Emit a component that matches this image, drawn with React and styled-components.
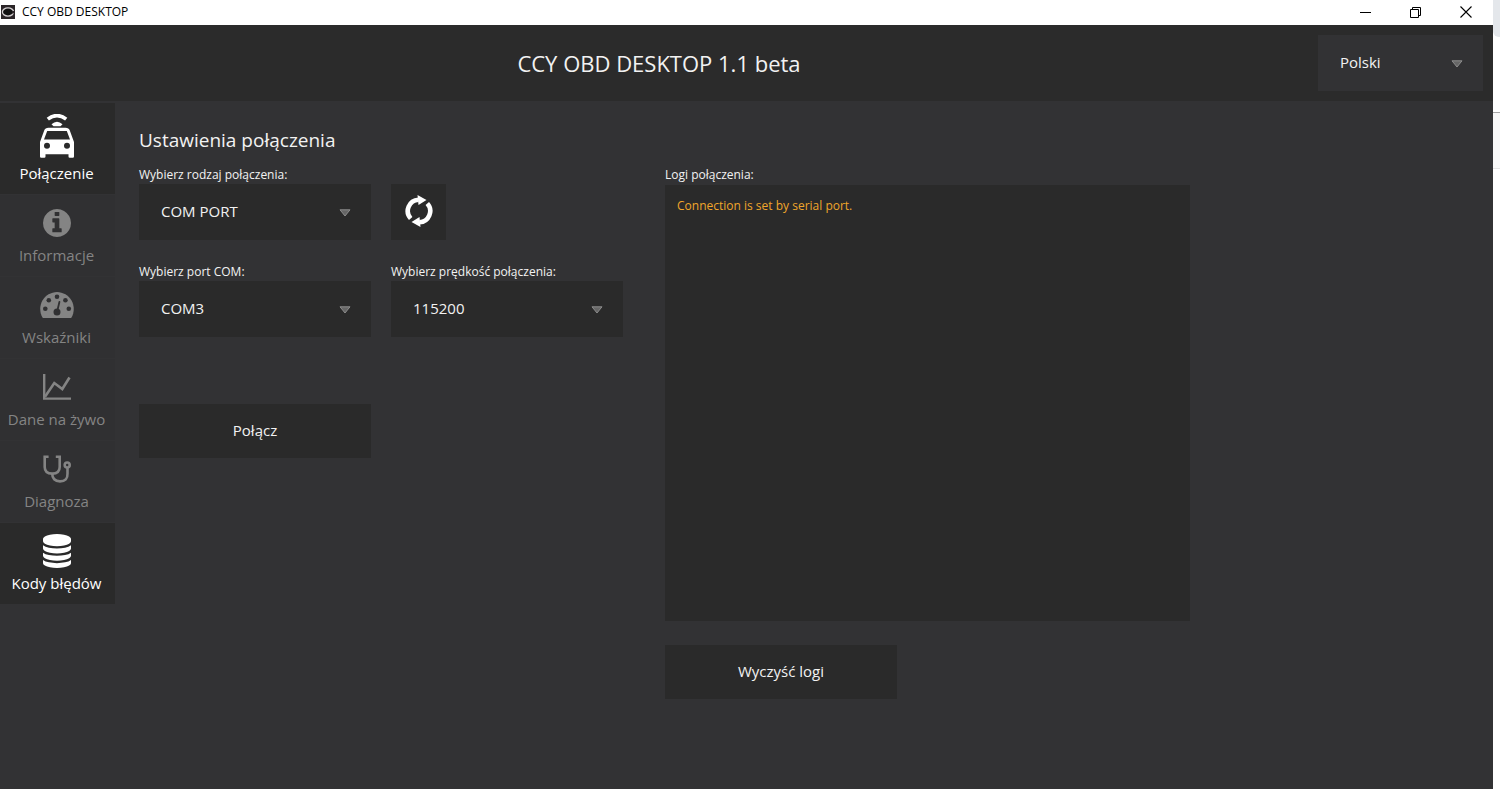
import { useState } from "react"
import styled, { createGlobalStyle } from "styled-components"

const GlobalStyle = createGlobalStyle`
    * {
        box-sizing: border-box;
    }
    body {
        margin: 0;
        background: #FFF;
        font-family: "Segoe UI", "Open Sans", "Noto Sans", sans-serif;
    }
    button, select {
        font-family: inherit;
    }
`;

function LogoIcon(){
    return(
        <svg width="14" height="14" viewBox="0 0 14 14" aria-hidden="true">
            <rect width="14" height="14" fill="#2B2528" />
            <ellipse cx="7" cy="7" rx="5.6" ry="4.1" fill="#111" stroke="#D5D0D2" strokeWidth="1.3" />
            <path d="M11 6h3v2.400h-3z" fill="#2B2528" />
        </svg>
    )
}

function CarIcon(){
    return(
        <svg width="34" height="44" viewBox="0 0 34 44" fill="currentColor" aria-hidden="true">
            <path d="M7.8 5.2Q17-2 26.200 5.200" fill="none" stroke="currentColor" strokeWidth="3.600" />
            <path d="M11.500 10.200Q17 5.200 22.500 10.200L20.500 12.200H13.500Z" />
            <path
                fillRule="evenodd"
                d="M8.500 13.700H25.500Q28.800 13.700 29.800 16.500L34 28V42.500Q34 43.700 32.800 43.700H29.700Q28.500 43.700 28.500 42.500V40.300H5.500V42.500Q5.500 43.700 4.300 43.700H1.200Q0 43.700 0 42.500V28L4.200 16.500Q5.200 13.700 8.500 13.700ZM7.200 17L4 25.600H30L26.800 17ZM7 28.700A3 3 0 1 0 7 34.700A3 3 0 1 0 7 28.700ZM27 28.700A3 3 0 1 0 27 34.700A3 3 0 1 0 27 28.700Z"
            />
        </svg>
    )
}

function InfoIcon(){
    return(
        <svg width="28" height="28" viewBox="0 128 1536 1536" fill="currentColor" aria-hidden="true">
            <path d="M1024 1376v-160q0-14-9-23t-23-9h-96v-512q0-14-9-23t-23-9h-320q-14 0-23 9t-9 23v160q0 14 9 23t23 9h96v320h-96q-14 0-23 9t-9 23v160q0 14 9 23t23 9h448q14 0 23-9t9-23zm-128-896v-160q0-14-9-23t-23-9h-192q-14 0-23 9t-9 23v160q0 14 9 23t23 9h192q14 0 23-9t9-23zm640 416q0 209-103 385.500t-279.500 279.500-385.500 103-385.500-103-279.500-279.500-103-385.500 103-385.500 279.500-279.500 385.500-103 385.500 103 279.500 279.500 103 385.500z" />
        </svg>
    )
}

function GaugeIcon(){
    return(
        <svg width="34" height="26" viewBox="0 0 34 26" aria-hidden="true">
            <path d="M17 0A17 17 0 0 1 31.500 25.500Q31.100 26 30.400 26H3.600Q2.900 26 2.500 25.500A17 17 0 0 1 17 0Z" fill="currentColor" />
            <g fill="#303032">
                <circle cx="5.300" cy="16.700" r="2.300" />
                <circle cx="8.800" cy="8.200" r="2.300" />
                <circle cx="17" cy="4.800" r="2.300" />
                <circle cx="25.400" cy="8.200" r="2.300" />
                <circle cx="28.800" cy="16.700" r="2.300" />
                <circle cx="17" cy="20" r="3.500" />
            </g>
            <path d="M17.400 18.500L19.400 10" stroke="#303032" strokeWidth="1.800" strokeLinecap="round" />
        </svg>
    )
}

function ChartIcon(){
    return(
        <svg width="28" height="26" viewBox="0 0 28 26" fill="none" stroke="currentColor" aria-hidden="true">
            <path d="M1.200 0V24.600H28" strokeWidth="2.400" />
            <path d="M2 22.800L11.300 9L19.300 15L26.500 3.500" strokeWidth="2.600" />
        </svg>
    )
}

function StethoscopeIcon(){
    return(
        <svg width="28" height="28" viewBox="0 0 28 28" fill="none" stroke="currentColor" strokeWidth="2.600" aria-hidden="true">
            <path d="M5.600 1.700H1.700V12Q1.700 18.600 9.200 18.600T16.700 12V1.700H12.800" />
            <path d="M9.200 18.600Q9.200 26.400 17 26.400T24.500 18.600V13" />
            <circle cx="24.200" cy="10" r="2.500" />
        </svg>
    )
}

function DatabaseIcon(){
    return(
        <svg width="28" height="34" viewBox="0 0 1536 1792" preserveAspectRatio="none" fill="currentColor" aria-hidden="true">
            <path d="M768 768q237 0 443-43t325-127v170q0 69-103 128t-280 93.500-385 34.500-385-34.500-280-93.500-103-128v-170q119 84 325 127t443 43zm0 768q237 0 443-43t325-127v170q0 69-103 128t-280 93.500-385 34.500-385-34.500-280-93.500-103-128v-170q119 84 325 127t443 43zm0-384q237 0 443-43t325-127v170q0 69-103 128t-280 93.500-385 34.500-385-34.500-280-93.500-103-128v-170q119 84 325 127t443 43zm0-1152q208 0 385 34.500t280 93.500 103 128v128q0 69-103 128t-280 93.500-385 34.500-385-34.500-280-93.500-103-128v-128q0-69 103-128t280-93.500 385-34.500z" />
        </svg>
    )
}

function RefreshIcon(){
    return(
        <svg width="28" height="32" viewBox="-14 -16 28 32" fill="currentColor" aria-hidden="true">
            <path d="M-8.300 7.500A11.200 11.200 0 0 1 -0.500 -11.200" fill="none" stroke="currentColor" strokeWidth="4.600" />
            <path d="M-1.500 -16L7.500 -11L-0.500 -6Z" />
            <path d="M8.300 -7.500A11.200 11.200 0 0 1 0.500 11.200" fill="none" stroke="currentColor" strokeWidth="4.600" />
            <path d="M1.500 16L-7.500 11L0.500 6Z" />
        </svg>
    )
}

const navItems = [
    { name: "Połączenie", icon: CarIcon, enabled: true },
    { name: "Informacje", icon: InfoIcon },
    { name: "Wskaźniki", icon: GaugeIcon },
    { name: "Dane na żywo", icon: ChartIcon },
    { name: "Diagnoza", icon: StethoscopeIcon },
    { name: "Kody błędów", icon: DatabaseIcon, enabled: true },
]

function Dropdown({ id, options, light, label }){
    return(
        <SelectWrapper>
            <Select id={id} aria-label={label} $light={light}>
                {options.map((option) => <option key={option}>{option}</option>)}
            </Select>
            <Arrow width="12" height="8" viewBox="0 0 12 8" aria-hidden="true">
                <path d="M1 0.800H11L6 7Z" fill="#666" stroke="#949494" strokeWidth="0.900" />
            </Arrow>
        </SelectWrapper>
    )
}

function TitleBar(){
    return(
        <TitleBarWrapper>
            <LogoIcon />
            <AppName>CCY OBD DESKTOP</AppName>
            <WindowButton aria-label="Minimalizuj">
                <svg width="12" height="12" viewBox="0 0 12 12"><path d="M0 6.500H11" stroke="#000" /></svg>
            </WindowButton>
            <WindowButton aria-label="Przywróć">
                <svg width="12" height="12" viewBox="0 0 12 12" fill="none" stroke="#000">
                    <path d="M0.500 3.500H8.500V11.500H0.500ZM2.500 3.500V1.500H10.500V9.500H8.500" />
                </svg>
            </WindowButton>
            <WindowButton aria-label="Zamknij">
                <svg width="12" height="12" viewBox="0 0 12 12"><path d="M0.500 0.500L11.500 11.500M11.500 0.500L0.500 11.500" stroke="#000" strokeWidth="1.100" /></svg>
            </WindowButton>
        </TitleBarWrapper>
    )
}

function App(){
    const [logs, setLogs] = useState(["Connection is set by serial port."])

    return(
        <Desktop>
            <GlobalStyle />
            <Window>
                <TitleBar />
                <Header>
                    <Title>CCY OBD DESKTOP 1.1 beta</Title>
                    <LanguageBox>
                        <Dropdown label="Język" options={["Polski", "English"]} light />
                    </LanguageBox>
                </Header>
                <Body>
                    <Nav>
                        {navItems.map(({ name, icon: Icon, enabled }) => (
                            <NavButton key={name} disabled={!enabled}>
                                <NavIcon><Icon /></NavIcon>
                                {name}
                            </NavButton>
                        ))}
                    </Nav>
                    <Main>
                        <SectionTitle>Ustawienia połączenia</SectionTitle>
                        <Columns>
                            <Form>
                                <Field>
                                    <Label htmlFor="type">Wybierz rodzaj połączenia:</Label>
                                    <Dropdown id="type" options={["COM PORT", "WiFi"]} />
                                </Field>
                                <RefreshButton type="button" aria-label="Odśwież">
                                    <RefreshIcon />
                                </RefreshButton>
                                <Field>
                                    <Label htmlFor="port">Wybierz port COM:</Label>
                                    <Dropdown id="port" options={["COM3", "COM4"]} />
                                </Field>
                                <Field>
                                    <Label htmlFor="speed">Wybierz prędkość połączenia:</Label>
                                    <Dropdown id="speed" options={["115200", "38400", "9600"]} />
                                </Field>
                                <ConnectButton type="button">Połącz</ConnectButton>
                            </Form>
                            <LogPanel>
                                <Label as="span" id="logs">Logi połączenia:</Label>
                                <LogBox role="log" aria-labelledby="logs">
                                    {logs.map((line) => <LogLine key={line}>{line}</LogLine>)}
                                </LogBox>
                                <ClearButton type="button" onClick={() => setLogs([])}>Wyczyść logi</ClearButton>
                            </LogPanel>
                        </Columns>
                    </Main>
                </Body>
            </Window>
            <Behind>
                <BehindTab />
                <BehindToolbar />
            </Behind>
        </Desktop>
    )
}

export default App

const Desktop = styled.div`
    display: flex;
    min-height: 100vh;
`;

const Window = styled.div`
    flex: 1;
    display: flex;
    flex-direction: column;
    background: #323234;
    color: #F2F2F2;
`;

const Behind = styled.div`
    width: 7px;
    background: #FFF;
`;

const BehindTab = styled.div`
    height: 37px;
    background: #E4E7EB;
    border-bottom-left-radius: 6px;
`;

const BehindToolbar = styled.div`
    height: 57px;
    margin-top: 75px;
    background: #F8F8F8;
    border-top: 1px solid #A5A5A5;
    border-bottom: 1px solid #E4E4E4;
`;

const TitleBarWrapper = styled.div`
    display: flex;
    align-items: center;
    height: 25px;
    padding: 0 2px 1px 1px;
    background: #FFF;
    color: #000;
`;

const AppName = styled.span`
    flex: 1;
    padding-left: 7px;
    font-size: 12px;
    line-height: 22px;
`;

const WindowButton = styled.button`
    display: flex;
    align-items: center;
    justify-content: center;
    width: 50px;
    height: 22px;
    padding: 0;
    border: none;
    background: none;
`;

const Header = styled.header`
    display: flex;
    align-items: center;
    height: 76px;
    padding-right: 10px;
    background: #2B2B2B;
`;

const Title = styled.h1`
    flex: 1;
    margin: 0;
    font-size: 22px;
    font-weight: 400;
    line-height: 30px;
    text-align: center;
`;

const LanguageBox = styled.div`
    width: 165px;
`;

const Body = styled.div`
    flex: 1;
    display: flex;
`;

const Nav = styled.nav`
    display: flex;
    flex-direction: column;
    gap: 1px;
    width: 115px;
    padding-top: 2px;
`;

const NavButton = styled.button`
    display: flex;
    flex-direction: column;
    align-items: center;
    gap: 5px;
    padding: 11px 2px 11px 0;
    border: none;
    background: #2A2A2A;
    color: #FFF;
    font-size: 15px;
    line-height: 20px;
    white-space: nowrap;
    &:disabled {
        background: #303032;
        color: #848484;
    }
`;

const NavIcon = styled.span`
    display: flex;
    align-items: center;
    min-height: 34px;
`;

const Main = styled.main`
    flex: 1;
    display: flex;
    flex-direction: column;
    padding: 24px 24px 90px;
`;

const SectionTitle = styled.h2`
    margin: 0 0 11px;
    font-size: 19px;
    font-weight: 400;
    line-height: 30px;
`;

const Columns = styled.div`
    flex: 1;
    display: flex;
    gap: 42px;
`;

const Form = styled.form`
    display: grid;
    grid-template-columns: 232px 232px;
    align-content: start;
    align-items: end;
    gap: 23px 20px;
`;

const Field = styled.div`
    display: flex;
    flex-direction: column;
`;

const Label = styled.label`
    font-size: 12px;
    line-height: 18px;
`;

const SelectWrapper = styled.div`
    position: relative;
`;

const Select = styled.select`
    display: block;
    appearance: none;
    width: 100%;
    height: 56px;
    padding: 0 40px 2px 22px;
    border: none;
    border-radius: 0;
    background: ${({ $light }) => ($light ? "#323234" : "#2A2A2A")};
    color: #F2F2F2;
    font-size: 15px;
`;

const Arrow = styled.svg`
    position: absolute;
    top: 25px;
    right: 20px;
    pointer-events: none;
`;

const Button = styled.button`
    width: 232px;
    height: 54px;
    padding: 0 0 2px;
    border: none;
    background: #2A2A2A;
    color: #F2F2F2;
    font-size: 15px;
`;

const RefreshButton = styled(Button)`
    display: flex;
    align-items: center;
    justify-content: center;
    width: 55px;
    height: 56px;
    color: #FFF;
`;

const ConnectButton = styled(Button)`
    margin-top: 44px;
`;

const LogPanel = styled.section`
    flex: 1;
    display: flex;
    flex-direction: column;
    max-width: 525px;
`;

const LogBox = styled.div`
    flex: 1;
    margin-top: 1px;
    padding: 12px;
    background: #2A2A2A;
`;

const LogLine = styled.p`
    margin: 0;
    color: #F0A62A;
    font-size: 12px;
    line-height: 18px;
`;

const ClearButton = styled(Button)`
    margin-top: 24px;
`;
